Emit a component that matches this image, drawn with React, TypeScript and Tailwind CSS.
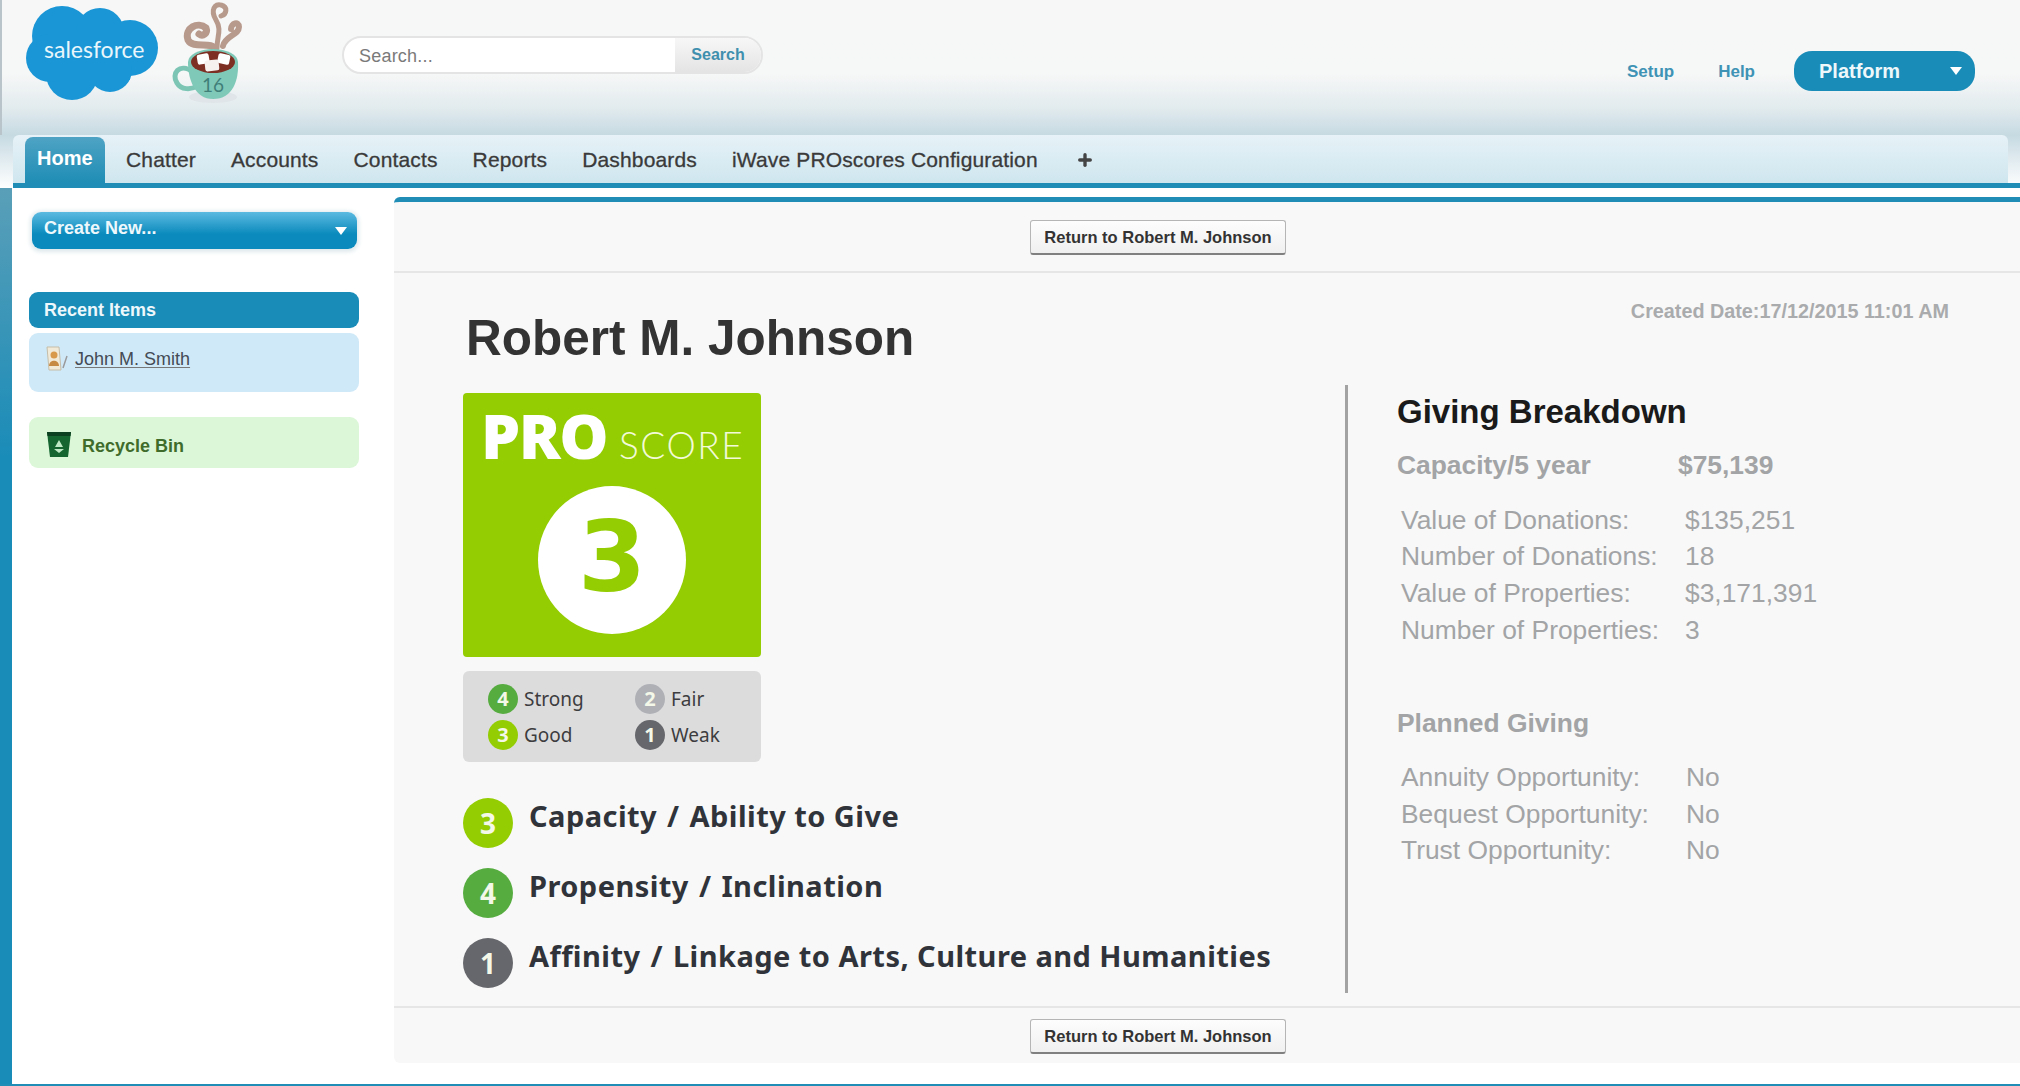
import { Plus } from "lucide-react";

const arial = "font-['Liberation_Sans',Arial,sans-serif]";

function Cloud() {
  return (
    <div className="relative w-[136px] h-[96px]">
      <svg width="136" height="96" viewBox="25 5 136 96" className="block">
        <g fill="#1a96d6">
          <circle cx="62" cy="36" r="30" />
          <circle cx="100" cy="32" r="24" />
          <circle cx="130" cy="48" r="28" />
          <circle cx="110" cy="70" r="22" />
          <circle cx="72" cy="74" r="26" />
          <circle cx="50" cy="58" r="24" />
          <rect x="50" y="30" width="80" height="50" />
        </g>
      </svg>
      <span className="absolute left-[19px] top-[29px] font-['Lato',sans-serif] text-[23px] leading-[30px] text-[#eaf6fb]">
        salesforce
      </span>
    </div>
  );
}

function Cup() {
  return (
    <svg width="75" height="105" viewBox="170 0 75 105" className="block">
      <g fill="none" stroke="#b89a8c" strokeLinecap="round">
        <path d="M214 50 C212 40 192 50 187 40 C183 28 197 21 205 28 C207 33 202 37 198 34" strokeWidth="7" />
        <path d="M216 48 C216 36 221 30 215 20 C209 10 214 3 220 5 C227 7 226 14 220 16" strokeWidth="5" />
        <path d="M222 46 C224 36 238 35 238 27 C238 21 230 23 230 29" strokeWidth="6" />
      </g>
      <ellipse cx="212" cy="97" rx="24" ry="6" fill="#dfe5e8" />
      <path d="M192 72 C178 62 170 74 176 83 C180 90 190 90 196 86" fill="none" stroke="#7cc5b5" strokeWidth="5" />
      <path d="M187 62 L237 62 C238 80 232 99 212 99 C194 99 187 80 187 62 Z" fill="#7fc9b8" />
      <ellipse cx="212" cy="62" rx="25" ry="13" fill="#7fc9b8" />
      <ellipse cx="212" cy="62" rx="22" ry="11" fill="#7d2f24" />
      <rect x="196" y="54" width="12" height="10" rx="2" fill="#ffffff" transform="rotate(-10 202 58)" />
      <rect x="217" y="54" width="12" height="10" rx="2" fill="#ffffff" transform="rotate(12 223 58)" />
      <rect x="204" y="60" width="14" height="11" rx="2" fill="#f6f1ee" transform="rotate(-6 210 66)" />
      <text x="201" y="92" fontSize="19" fontFamily="Lato, sans-serif" fill="#3f7f78">16</text>
    </svg>
  );
}

function Header() {
  return (
    <div className="h-[135px] flex border-l-2 border-[#b8c4ca] bg-[linear-gradient(180deg,#f7f7f7_0%,#f6f7f7_55%,#e2ebee_80%,#c6dae2_100%)]">
      <div className="pl-[23px] pt-[5px]">
        <Cloud />
      </div>
      <div className="pl-[10px]">
        <Cup />
      </div>
      <div className="ml-[96px] mt-[36px] h-[38px] w-[421px] flex rounded-full border-2 border-[#e4e4e4] overflow-hidden bg-white">
        <div className={`w-[331px] pl-[15px] text-[18px] tracking-[0.2px] leading-[36px] text-[#7a7a7a] ${arial}`}>Search...</div>
        <div className={`flex-1 text-center bg-[linear-gradient(180deg,#f7f7f7,#e4e4e4)] text-[16px] leading-[34px] font-bold text-[#3f8fae] ${arial}`}>
          Search
        </div>
      </div>
      <div className={`ml-auto mr-[45px] mt-[51px] flex items-start ${arial}`}>
        <span className="mt-[11px] text-[17px] leading-[20px] font-bold text-[#3f93b5]">Setup</span>
        <span className="mt-[11px] ml-[44px] mr-[39px] text-[17px] leading-[20px] font-bold text-[#3f93b5]">Help</span>
        <div className="h-[40px] w-[181px] rounded-[18px] bg-[#1a8cb8] flex items-center pl-[25px] pr-[13px] justify-between">
          <span className="text-[20px] font-bold text-[#eef8fb]">Platform</span>
          <span className="w-0 h-0 border-x-[6px] border-x-transparent border-t-[8px] border-t-white" />
        </div>
      </div>
    </div>
  );
}

function Nav() {
  const tabs = ["Chatter", "Accounts", "Contacts", "Reports", "Dashboards", "iWave PROscores Configuration"];
  return (
    <div className="bg-[linear-gradient(180deg,#c6dae2,#ffffff)]">
      <div className="ml-[13px] mr-[12px] h-[48px] rounded-t-md bg-[linear-gradient(180deg,#e6f2f7,#cfe6ef)] flex items-end pl-[12px]">
        <div className={`w-[80px] h-[46px] mr-[-13px] rounded-t-lg bg-[linear-gradient(180deg,#4ea3c4,#1f8db5)] pl-[12px] leading-[42px] text-[20px] font-bold text-white ${arial}`}>
          Home
        </div>
        <div className={`ml-[34px] flex gap-[35px] h-[46px] items-center text-[21px] tracking-[0.15px] text-[#3a3a3a] [-webkit-text-stroke:0.3px_#3a3a3a] ${arial}`}>
          {tabs.map((t) => (
            <span key={t}>{t}</span>
          ))}
          <Plus size={18} strokeWidth={4.5} className="ml-[3px] text-[#444444]" />
        </div>
      </div>
      <div className="ml-[13px] h-[5px] bg-[#1f8db5]" />
    </div>
  );
}

function Sidebar() {
  return (
    <div className={`w-[382px] shrink-0 pl-[17px] pr-[35px] pt-[24px] ${arial}`}>
      <div className="ml-[3px] mr-[2px] h-[37px] rounded-[9px] bg-[linear-gradient(180deg,#5cbae0,#0a8abd_60%)] shadow-[0_1px_4px_2px_#dfe9ec] flex items-center justify-between pl-[12px] pr-[10px]">
        <span className="text-[18px] font-bold text-[#eef8fc] pb-[4px]">Create New...</span>
        <span className="w-0 h-0 border-x-[6px] border-x-transparent border-t-[8px] border-t-white" />
      </div>
      <div className="mt-[43px] h-[36px] rounded-[9px] bg-[#1a8cb8] pl-[15px] text-[18px] leading-[37px] font-bold text-[#eef8fc]">
        Recent Items
      </div>
      <div className="mt-[5px] h-[59px] rounded-[9px] bg-[#d0e9f8] flex items-start pl-[16px] pt-[11px]">
        <svg width="24" height="28" viewBox="0 0 24 28">
          <path d="M2 3 L14 3 L16 26 L4 26 Z" fill="#f2ead8" stroke="#c5bda8" />
          <circle cx="9" cy="11" r="3.5" fill="#d9994a" />
          <path d="M4 22 C4 15 14 15 14 22 Z" fill="#c78a45" />
          <path d="M18 24 L22 12" stroke="#9a9a9a" strokeWidth="1.5" />
        </svg>
        <span className="ml-[6px] mt-[4px] text-[18px] leading-[22px] text-[#444b55] underline underline-offset-2 decoration-[#777777]">John M. Smith</span>
      </div>
      <div className="mt-[25px] h-[51px] rounded-[9px] bg-[#dcf7d8] flex items-center pl-[17px] pt-[7px]">
        <svg width="26" height="28" viewBox="0 0 26 28" className="-mt-[5px]">
          <path d="M1 2 L25 2 L22 27 L4 27 Z" fill="#14652f" />
          <path d="M1 2 L25 2 L24.5 6 L1.5 6 Z" fill="#0c3f1f" />
          <path d="M13 10 L17 17 L9 17 Z M8 19 L18 19 L13 23 Z" fill="#bfe8c5" />
        </svg>
        <span className="ml-[10px] text-[18px] font-bold text-[#3f6b2b]">Recycle Bin</span>
      </div>
    </div>
  );
}

function ReturnButton() {
  return (
    <button className={`w-[256px] h-[35px] rounded-[3px] border border-[#b5b5b5] border-b-2 border-b-[#808080] bg-[linear-gradient(180deg,#fdfdfd,#f0f0f0)] text-[16.5px] font-bold text-[#333333] ${arial}`}>
      Return to Robert M. Johnson
    </button>
  );
}

function Dot({ n, color, size }: { n: number; color: string; size: "sm" | "lg" }) {
  const cls =
    size === "sm"
      ? "w-[30px] h-[30px] text-[20px]"
      : "w-[50px] h-[50px] text-[28px]";
  return (
    <span
      className={`${cls} rounded-full flex items-center justify-center shrink-0 font-bold text-[#f4f8e8] font-['Noto_Sans',sans-serif]`}
      style={{ backgroundColor: color }}
    >
      {n}
    </span>
  );
}

function ProScore() {
  return (
    <div className="w-[298px] h-[264px] rounded-[4px] bg-[#93cd02] flex flex-col items-center">
      <div className="mt-[4px] flex items-baseline w-full pl-[18px] text-white">
        <span className="font-['Open_Sans',sans-serif] font-extrabold text-[62px] leading-[76px] tracking-[-1.5px]">PRO</span>
        <span className="ml-[12px] font-['Lato',sans-serif] font-light text-[37px] leading-[40px] tracking-[1.5px] text-[#f2fad8]">SCORE</span>
      </div>
      <div className="mt-[13px] w-[148px] h-[148px] rounded-full bg-white flex items-center justify-center font-['DejaVu_Sans',sans-serif] font-bold text-[98px] leading-none text-[#93cd02]">
        <span className="-mt-[6px]">3</span>
      </div>
    </div>
  );
}

function Legend() {
  const items = [
    { n: 4, color: "#56ac3f", label: "Strong" },
    { n: 2, color: "#aeb0b5", label: "Fair" },
    { n: 3, color: "#93cd02", label: "Good" },
    { n: 1, color: "#66676c", label: "Weak" },
  ];
  return (
    <div className="mt-[14px] w-[298px] h-[91px] rounded-[6px] bg-[#dcdcdd] grid grid-cols-[147px_1fr] grid-rows-[36px_36px] pl-[25px] pt-[10px] font-['Noto_Sans',sans-serif] text-[19px] text-[#3d3d3f]">
      {items.map((it) => (
        <div key={it.n} className="flex items-center gap-[6px]">
          <Dot n={it.n} color={it.color} size="sm" />
          <span>{it.label}</span>
        </div>
      ))}
    </div>
  );
}

function Rating({ n, color, label, detail }: { n: number; color: string; label: string; detail: string }) {
  return (
    <div className="flex items-start gap-[16px]">
      <Dot n={n} color={color} size="lg" />
      <span className="-mt-[2px] font-['Noto_Sans',sans-serif] font-bold text-[29px] tracking-[0.45px] leading-[40px] text-[#30343a]">
        {label} <span className="mx-[2px]">/</span> {detail}
      </span>
    </div>
  );
}

function StatRows({ rows, first }: { rows: [string, string][]; first: string }) {
  return (
    <div className={`mt-[21px] ml-[4px] grid ${first} auto-rows-[36.67px] items-center text-[26.4px] text-[#a2a4a6]`}>
      {rows.map(([k, v]) => (
        <div key={k} className="contents">
          <span>{k}</span>
          <span>{v}</span>
        </div>
      ))}
    </div>
  );
}

function Main() {
  return (
    <div className="flex-1 h-[866px] rounded-tl-md rounded-bl-md border-t-[5px] border-[#1f8db5] bg-[#f8f8f8] flex flex-col">
      <div className="h-[71px] shrink-0 border-b-2 border-[#e6e6e6] flex justify-center pt-[18px] pr-[98px]">
        <ReturnButton />
      </div>
      <div className="flex-1">
        <div className="h-[112px] flex items-start justify-between pl-[72px] pr-[71px]">
          <h1 className={`mt-[37px] text-[49.5px] leading-[56px] font-bold text-[#333333] ${arial}`}>Robert M. Johnson</h1>
          <span className={`mt-[26px] text-[19.8px] leading-[24px] font-bold text-[#a9abad] ${arial}`}>Created Date:17/12/2015 11:01 AM</span>
        </div>
        <div className="flex">
          <div className="w-[951px] pl-[69px] pt-[8px]">
            <ProScore />
            <Legend />
            <div className="mt-[36px] flex flex-col gap-[20px]">
              <Rating n={3} color="#93cd02" label="Capacity" detail="Ability to Give" />
              <Rating n={4} color="#56ac3f" label="Propensity" detail="Inclination" />
              <Rating n={1} color="#66676c" label="Affinity" detail="Linkage to Arts, Culture and Humanities" />
            </div>
          </div>
          <div className={`h-[608px] border-l-[3px] border-[#a3a3a3] pl-[49px] pt-[7px] ${arial}`}>
            <h2 className="text-[33px] leading-[40px] font-bold text-[#1a1a1a]">Giving Breakdown</h2>
            <div className="mt-[17px] flex text-[26.4px] leading-[32px] font-bold text-[#a2a4a6]">
              <span className="w-[281px]">Capacity/5 year</span>
              <span>$75,139</span>
            </div>
            <StatRows
              first="grid-cols-[284px_1fr]"
              rows={[
                ["Value of Donations:", "$135,251"],
                ["Number of Donations:", "18"],
                ["Value of Properties:", "$3,171,391"],
                ["Number of Properties:", "3"],
              ]}
            />
            <div className="mt-[58px] text-[26.4px] leading-[32px] font-bold text-[#a2a4a6]">Planned Giving</div>
            <StatRows
              first="grid-cols-[285px_1fr]"
              rows={[
                ["Annuity Opportunity:", "No"],
                ["Bequest Opportunity:", "No"],
                ["Trust Opportunity:", "No"],
              ]}
            />
          </div>
        </div>
      </div>
      <div className="h-[57px] shrink-0 border-t-2 border-[#e6e6e6] flex justify-center pt-[11px] pr-[98px]">
        <ReturnButton />
      </div>
    </div>
  );
}

export default function App() {
  return (
    <div className="w-[2020px] h-[1086px] overflow-hidden bg-white flex flex-col">
      <Header />
      <Nav />
      <div className="flex-1 flex border-b-2 border-[#1f8db5]">
        <div className="w-[12px] shrink-0 bg-[linear-gradient(180deg,#5a9fb8,#1a8cb8_30%)]" />
        <Sidebar />
        <div className="flex-1 pt-[9px]">
          <Main />
        </div>
      </div>
    </div>
  );
}
